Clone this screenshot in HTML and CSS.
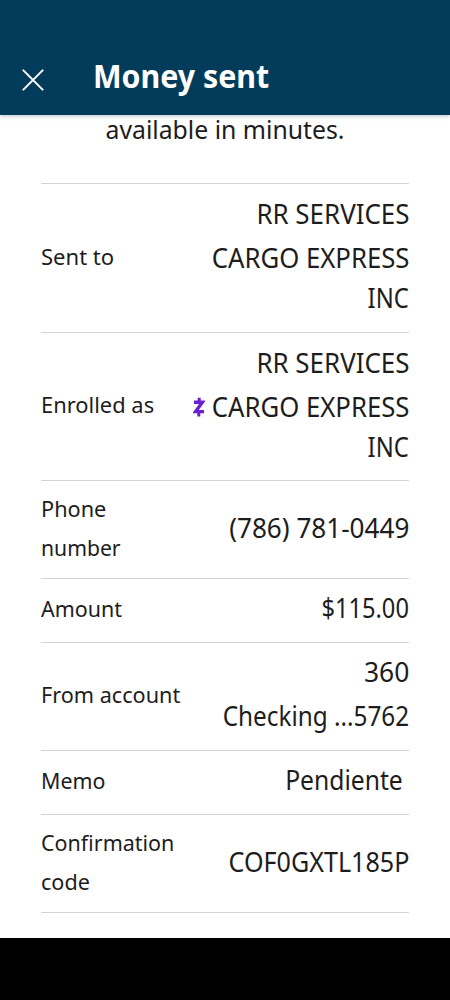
FILE: index.html
```
<!DOCTYPE html>
<html lang="en">
<head>
<meta charset="utf-8">
<title>Money sent</title>
<link rel="stylesheet" href="styles.css">
</head>
<body>
<div class="screen">
  <header class="header">
    <svg class="close" width="22" height="22" viewBox="0 0 22 22"><path d="M1.4 1.4 20.6 20.6M20.6 1.4 1.4 20.6"/></svg>
    <h1 class="title">Money sent</h1>
  </header>
  <main class="content">
    <p class="notice">available in minutes.</p>
    <dl class="details">
      <div class="row tall">
        <dt><span style="--s:.98">Sent to</span></dt>
        <dd><span style="--s:.96">RR SERVICES</span><span style="--s:.953">CARGO EXPRESS</span><span class="last" style="--s:.88">INC</span></dd>
      </div>
      <div class="row tall second">
        <dt><span style="--s:.973">Enrolled as</span></dt>
        <dd><span style="--s:.96">RR SERVICES</span><div class="with-icon"><svg class="zelle" width="12" height="20" viewBox="0 0 12 20"><path d="M1 5.2H9.4L2.6 14.6H11"/><path class="stem" d="M6.2 .8V5M5.8 15V19.4"/></svg><span style="--s:.953">CARGO EXPRESS</span></div><span class="last" style="--s:.88">INC</span></dd>
      </div>
      <div class="row double">
        <dt><span style="--s:.965">Phone</span><span style="--s:.94">number</span></dt>
        <dd><span style="--s:.967">(786) 781-0449</span></dd>
      </div>
      <div class="row">
        <dt><span style="--s:.952">Amount</span></dt>
        <dd><span style="--s:.875">$115.00</span></dd>
      </div>
      <div class="row account">
        <dt><span style="--s:.962">From account</span></dt>
        <dd><span style="--s:.98">360</span><span style="--s:.9">Checking ...5762</span></dd>
      </div>
      <div class="row">
        <dt><span style="--s:.95">Memo</span></dt>
        <dd class="memo"><span style="--s:.913">Pendiente</span></dd>
      </div>
      <div class="row double">
        <dt><span style="--s:.955">Confirmation</span><span style="--s:.96">code</span></dt>
        <dd><span style="--s:.93">COF0GXTL185P</span></dd>
      </div>
    </dl>
  </main>
  <footer class="navbar"></footer>
</div>
</body>
</html>
```
FILE: styles.css
```
* { box-sizing: border-box; margin: 0; padding: 0; }

body {
  font-family: "Noto Sans", "Open Sans", sans-serif;
  color: #1d1d1d;
  background: #fff;
}

.screen {
  display: flex;
  flex-direction: column;
  width: 450px;
  height: 1000px;
  overflow: hidden;
}

.header {
  display: flex;
  flex: none;
  align-items: flex-end;
  gap: 49px;
  height: 115px;
  padding: 0 22px 17px;
  background: #033c5a;
  box-shadow: 0 1px 4px rgba(30, 50, 80, .3);
  z-index: 1;
}

.close {
  flex: none;
  margin-bottom: 7px;
  fill: none;
  stroke: #fff;
  stroke-width: 2;
  stroke-linecap: round;
}

.title {
  font-size: 32px;
  line-height: 44px;
  font-weight: 700;
  color: #fff;
  white-space: nowrap;
  transform: scaleX(.948);
  transform-origin: left;
}

.content {
  flex: none;
  height: 823px;
  padding: 0 41px;
}

.notice {
  height: 68px;
  font-size: 26px;
  line-height: 28px;
  text-align: center;
  white-space: nowrap;
  transform: scaleX(.953);
}

.details { border-top: 1px solid #d4d4d4; }

.row {
  display: flex;
  align-items: center;
  justify-content: space-between;
  height: 64px;
  padding-bottom: 4px;
  border-bottom: 1px solid #d4d4d4;
}

.row.tall { height: 149px; }
.row.tall.second { height: 148px; }
.row.double { height: 98px; padding-bottom: 3px; }
.row.account { height: 108px; }

dt, dd {
  display: flex;
  flex-direction: column;
  white-space: nowrap;
}

dt {
  align-items: flex-start;
  font-size: 22.5px;
  line-height: 39px;
}

dd {
  align-items: flex-end;
  margin-bottom: 1px;
  font-size: 27px;
  line-height: 44px;
}

.tall dd { margin-bottom: 4px; }
.memo { padding-right: 6px; }

dt span, dd span {
  transform: scaleX(var(--s));
  transform-origin: left;
}

dd span { transform-origin: right; }
dd .last { line-height: 36px; }

.with-icon { display: flex; align-items: center; }

.zelle {
  margin-right: -3px;
  fill: none;
  stroke: #6a1fd0;
  stroke-width: 3.4;
}

.zelle .stem { stroke-width: 3; }

.navbar { flex: 1; background: #000; }
```
